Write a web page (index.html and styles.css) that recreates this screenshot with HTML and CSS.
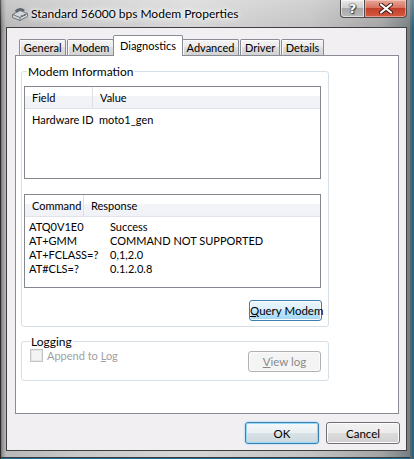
FILE: index.html
```html
<!DOCTYPE html>
<html lang="en">
  <head>
    <meta charset="UTF-8" />
    <meta name="viewport" content="width=device-width, initial-scale=1.0" />
    <title>Standard 56000 bps Modem Properties</title>
    <link rel="stylesheet" href="styles.css">
  </head>
  <body>
    <div class="window">
      <div class="titlebar">
        <svg class="app-icon" width="18" height="17" viewBox="0 0 18 17">
          <path d="M1.5 9.5 L9 5.5 L16.5 8.5 L16.5 11.5 L9 15.5 L1.5 12.5 Z" fill="#d3d6da" stroke="#6c737b" />
          <path d="M1.5 9.5 L9 12.5 L16.5 8.5" fill="none" stroke="#6c737b" />
          <path d="M9 12.5 L9 15.5" stroke="#6c737b" />
          <path d="M3.5 6 Q8.5 0.5 14 5 L12 6.5 Q9 4 6 7.2 Z" fill="#59616b" />
          <circle cx="11" cy="11" r="0.9" fill="#59616b" />
          <circle cx="13.5" cy="10" r="0.9" fill="#59616b" />
        </svg>
        <span class="title">Standard 56000 bps Modem Properties</span>
        <div class="caption-btns">
          <span class="cap-btn help">?</span>
          <span class="cap-btn close">
            <svg width="14" height="11" viewBox="0 0 14 11">
              <path d="M2 1.5 L12 9.5 M12 1.5 L2 9.5" stroke="#3a1a14" stroke-width="4" stroke-linecap="round" />
              <path d="M2 1.5 L12 9.5 M12 1.5 L2 9.5" stroke="#fff" stroke-width="2.2" stroke-linecap="round" />
            </svg>
          </span>
        </div>
      </div>

      <div class="client">
        <div class="tabs">
          <span class="tab">General</span>
          <span class="tab">Modem</span>
          <span class="tab active">Diagnostics</span>
          <span class="tab">Advanced</span>
          <span class="tab">Driver</span>
          <span class="tab">Details</span>
        </div>

        <div class="panel">
          <fieldset class="group">
            <legend>Modem Information</legend>
            <div class="list list-info">
              <div class="list-head">
                <span class="head-cell field-col">Field</span>
                <span class="head-cell">Value</span>
              </div>
              <div class="info-row">
                <span class="field-col">Hardware ID</span>
                <span>moto1_gen</span>
              </div>
            </div>

            <div class="list list-cmd">
              <div class="list-head">
                <span class="head-cell cmd-col">Command</span>
                <span class="head-cell">Response</span>
              </div>
              <div class="cmd-rows">
                <span>ATQ0V1E0</span><span>Success</span>
                <span>AT+GMM</span><span>COMMAND NOT SUPPORTED</span>
                <span>AT+FCLASS=?</span><span>0,1,2.0</span>
                <span>AT#CLS=?</span><span>0.1.2.0.8</span>
              </div>
            </div>

            <div class="group-actions">
              <button class="btn btn-hot"><u>Q</u>uery Modem</button>
            </div>
          </fieldset>

          <fieldset class="group group-log">
            <legend>Logging</legend>
            <div class="log-row">
              <label class="check"><span class="check-box"></span><span>Append to <u>L</u>og</span></label>
              <button class="btn" disabled><u>V</u>iew log</button>
            </div>
          </fieldset>
        </div>

        <div class="dialog-btns">
          <button class="btn btn-default">OK</button>
          <button class="btn">Cancel</button>
        </div>
      </div>
    </div>
  </body>
</html>
```

FILE: styles.css
```css
* {
  margin: 0;
  padding: 0;
  box-sizing: border-box;
}

body {
  width: 414px;
  height: 459px;
  overflow: hidden;
  font-family: Lato, "Open Sans", sans-serif;
  font-size: 11px;
  color: #000;
  background-color: #fff;
}

.window {
  width: 414px;
  height: 459px;
  display: flex;
  flex-direction: column;
  background: linear-gradient(90deg, #4a4a4a 0, #8d8d8d 2px, #b9b9b9 6px, #c9c9c9 20%, #d6d6d6 45%, #c3c3c3 75%, #a4a4a4 92%, #6f7a80 100%);
  box-shadow: inset 1px 0 #2a2a2a, inset -1px 0 #1f6f94, inset -2px 0 #2f5d73, inset -4px 0 #56666e, inset 0 -1px #1f6f94, inset 0 -2px #3b3b3b;
}

/* title bar */
.titlebar {
  height: 28px;
  display: flex;
  align-items: flex-start;
  padding-left: 11px;
  background: linear-gradient(180deg, rgba(255, 255, 255, 0.25), rgba(255, 255, 255, 0));
}

.app-icon {
  margin-top: 5px;
  flex-shrink: 0;
}

.title {
  margin-left: 2px;
  margin-top: 6px;
  font-size: 12px;
  line-height: 16px;
  color: #000;
  text-shadow: 0 0 6px #fff, 0 0 10px #fff, 0 0 3px #fff;
}

.caption-btns {
  margin-left: auto;
  margin-right: 7px;
  display: flex;
}

.cap-btn {
  height: 18px;
  display: flex;
  justify-content: center;
  align-items: center;
  border: 1px solid #4d4d4d;
  border-top: none;
}

.help {
  width: 24px;
  border-radius: 0 0 0 4px;
  border-right: none;
  background: linear-gradient(180deg, #e9e9e9 0%, #cfcfcf 45%, #a9a9a9 50%, #b9b9b9 100%);
  box-shadow: inset 0 0 0 1px rgba(255, 255, 255, 0.55);
  font-family: "DejaVu Sans", sans-serif;
  font-weight: bold;
  font-size: 13px;
  color: #fff;
  text-shadow: 0 0 1px #333, 0 0 2px #333, 1px 1px 1px #444;
}

.close {
  width: 43px;
  border-radius: 0 0 4px 0;
  background: linear-gradient(180deg, #e7a89c 0%, #d9735f 45%, #c2402b 50%, #d65a3f 100%);
  box-shadow: inset 0 0 0 1px rgba(255, 220, 210, 0.5);
}

/* client area */
.client {
  height: 422px;
  margin: 0 8px 0 7px;
  display: flex;
  flex-direction: column;
  background-color: #f2eff3;
  box-shadow: 0 0 0 1px #3f3f3f;
}

.tabs {
  height: 27px;
  padding-left: 12px;
  display: flex;
  align-items: flex-end;
  gap: 1px;
}

.tab {
  height: 16px;
  padding: 0 3.8px;
  line-height: 15px;
  border: 1px solid #898c95;
  border-bottom: none;
  border-radius: 2px 2px 0 0;
  background: linear-gradient(180deg, #f3f3f3 0%, #ebebeb 50%, #dedede 50%, #d2d2d2 100%);
  box-shadow: inset 0 1px #fff, inset 1px 0 #fafafa;
  white-space: nowrap;
}

.tab.active {
  position: relative;
  height: 21px;
  margin: 0 -2px -1px -2px;
  padding: 0 5.8px;
  line-height: 19px;
  background: #fff;
  box-shadow: none;
  z-index: 1;
}

.panel {
  height: 359px;
  margin: 0 7px 0 8px;
  padding: 8px 0 0 5px;
  border: 1px solid #898c95;
  background-color: #fff;
}

/* group boxes */
.group {
  width: 308px;
  padding: 7px 7px 5px 2px;
  border: 1px solid #d5dfe5;
  border-radius: 3px;
  box-shadow: inset 0 0 0 1px #fff;
}

.group legend {
  margin-left: 3px;
  padding: 0 1px;
  line-height: 15px;
  font-size: 12px;
}

.list {
  border: 1px solid #828790;
  background-color: #fff;
}

.list-info {
  height: 93px;
}

.list-cmd {
  height: 94px;
  margin-top: 15px;
}

.list-head {
  height: 22px;
  display: flex;
  background: linear-gradient(180deg, #fff 0%, #fff 45%, #f3f4f8 45%, #f1f2f7 100%);
  border-bottom: 1px solid #e2e3ea;
}

.head-cell {
  padding-left: 7px;
  line-height: 21px;
}

.field-col {
  width: 68px;
  flex-shrink: 0;
}

.head-cell.field-col,
.head-cell.cmd-col {
  border-right: 1px solid #dfe0e6;
}

.cmd-col {
  width: 59px;
}

.info-row {
  display: flex;
  padding: 3px 0 0 7px;
  line-height: 15px;
}

.info-row .field-col {
  width: 67px;
}

.cmd-rows {
  display: grid;
  grid-template-columns: 81px auto;
  padding: 3px 0 0 4px;
  line-height: 14px;
}

.group-actions {
  display: flex;
  justify-content: flex-end;
  margin-top: 12px;
  margin-right: -1px;
}

.group-log {
  margin-top: 7px;
  padding: 0 7px 8px 2px;
}

.group-log legend {
  margin-left: 6px;
}

.log-row {
  display: flex;
  justify-content: space-between;
  align-items: flex-start;
  padding-left: 6px;
}

.check {
  display: flex;
  align-items: center;
  gap: 4px;
  color: #9f9f9f;
  line-height: 13px;
}

.check-box {
  width: 13px;
  height: 13px;
  border: 1px solid #c4c4c4;
  background-color: #f4f4f4;
  box-shadow: inset 0 0 0 1px #e6e6e6;
}

/* buttons */
.btn {
  width: 73px;
  height: 21px;
  font-family: inherit;
  font-size: 11.5px;
  color: #000;
  white-space: nowrap;
  border: 1px solid #707070;
  border-radius: 3px;
  background: linear-gradient(180deg, #f2f2f2 0%, #ebebeb 50%, #dddddd 50%, #cfcfcf 100%);
  box-shadow: inset 0 0 0 1px #fcfcfc;
}

.btn-hot {
  border-color: #3c7fb1;
  background: linear-gradient(180deg, #eaf6fd 0%, #d9f0fc 50%, #bee6fd 50%, #a7d9f5 100%);
}

.btn:disabled {
  margin-top: 2px;
  color: #8a8a8a;
  border-color: #adb2b5;
  background: #f4f4f4;
  box-shadow: inset 0 0 0 1px #fbfbfb;
}

.dialog-btns {
  display: flex;
  justify-content: flex-end;
  gap: 7px;
  padding: 8px 6px 0 0;
}

.dialog-btns .btn {
  width: 74px;
  height: 22px;
}

.btn-default {
  border-color: #3c7fb1;
  box-shadow: inset 0 0 0 1px #97d8f6, 0 0 2px #7fc8ee;
  background: linear-gradient(180deg, #f4f8fa 0%, #e9eff2 50%, #d8e2e7 50%, #cdd8de 100%);
}
```
